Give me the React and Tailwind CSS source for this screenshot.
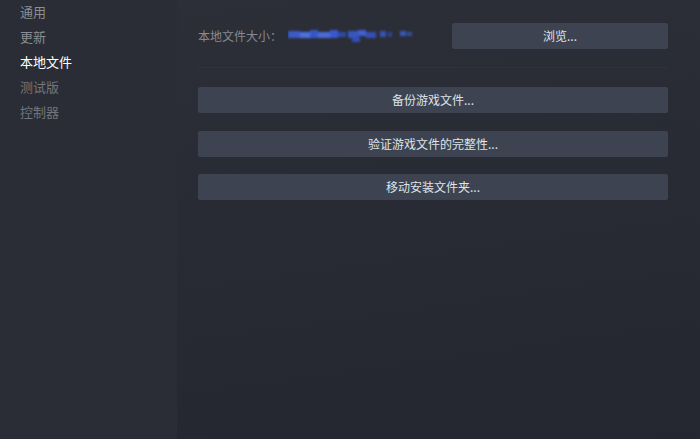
import React from "react";

const navItems = [
  { label: "通用", tone: "text-[#8a8d93]" },
  { label: "更新", tone: "text-[#8a8d93]" },
  { label: "本地文件", tone: "text-white" },
  { label: "测试版", tone: "text-[#72757b]" },
  { label: "控制器", tone: "text-[#72757b]" },
];

const actions = ["备份游戏文件...", "验证游戏文件的完整性...", "移动安装文件夹..."];

// pixelated, blurred size value (redacted in the screenshot)
function RedactedValue() {
  const blocks = [
    [0, 4, 12, 7, "#3a5cc8"],
    [12, 5, 10, 6, "#4d70e0"],
    [22, 3, 8, 8, "#3757c8"],
    [30, 5, 12, 6, "#4a6ad8"],
    [42, 3, 8, 8, "#3959cc"],
    [50, 5, 8, 5, "#2f4aa8"],
    [60, 4, 10, 7, "#3856c0"],
    [70, 3, 8, 6, "#3f5fd0"],
    [78, 5, 10, 6, "#3450b8"],
    [64, 10, 8, 5, "#3350b8"],
    [92, 4, 6, 6, "#3452b8"],
    [100, 5, 4, 5, "#2c4497"],
    [112, 4, 6, 5, "#3a56b8"],
    [119, 5, 5, 4, "#34509f"],
  ];
  return (
    <svg width="126" height="18" viewBox="0 0 126 18">
      <defs>
        <filter id="soft" x="-10%" y="-40%" width="120%" height="180%">
          <feGaussianBlur stdDeviation="0.8" />
        </filter>
      </defs>
      <g filter="url(#soft)">
        {blocks.map(([x, y, w, h, c], i) => (
          <rect key={i} x={x} y={y} width={w} height={h} fill={c} />
        ))}
      </g>
    </svg>
  );
}

export default function App() {
  return (
    <div className="w-[700px] h-[439px] flex overflow-hidden font-['Noto_Sans_CJK_SC','Noto_Sans',sans-serif] bg-[#2a2d35]">
      {/* sidebar */}
      <div className="w-[177px] shrink-0 bg-[#2a2d35] pl-5 -mt-[1px]">
        {navItems.map((item) => (
          <div key={item.label} className={`h-[25px] flex items-center text-[13px] ${item.tone}`}>
            {item.label}
          </div>
        ))}
      </div>

      {/* main panel */}
      <div className="flex-1 bg-[linear-gradient(172deg,#2c2f38_0%,#282b33_45%,#24272f_100%)] pl-[21px] pr-[32px] pt-[23px]">
        <div className="flex items-center justify-between">
          <div className="flex items-center gap-[6px] text-[12px] text-[#878a90]">
            <span>本地文件大小：</span>
            <RedactedValue />
          </div>
          <button className="w-[216px] h-[26px] rounded-[2px] bg-[#3d4350] text-[12px] text-[#dfe3e9]">
            浏览...
          </button>
        </div>

        <div className="mt-[18px] h-px bg-[#30333b]" />

        <div className="mt-[19px] flex flex-col gap-[17.5px]">
          {actions.map((a) => (
            <button key={a} className="h-[26px] w-full rounded-[2px] bg-[#3d4350] text-[12px] text-[#dfe3e9]">
              {a}
            </button>
          ))}
        </div>
      </div>
    </div>
  );
}
